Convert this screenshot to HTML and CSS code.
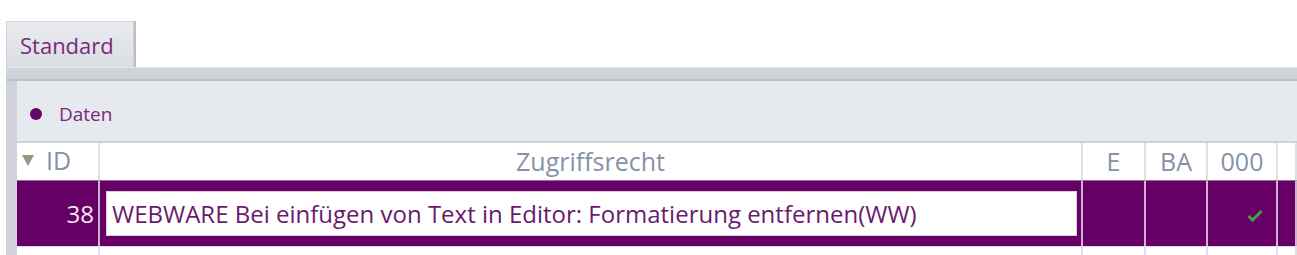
FILE: index.html
```html
<!DOCTYPE html>
<html>
<head>
<meta charset="utf-8">
<link rel="stylesheet" href="styles.css">
</head>
<body>
<div class="page">
  <div class="tabs">
    <div class="tab">Standard</div>
  </div>
  <div class="strip"></div>
  <div class="panel">
    <div class="panel-inner">
      <div class="section">
        <span class="bullet"></span>
        <span class="section-title">Daten</span>
      </div>
      <div class="grid">
        <div class="hcell hid"><svg class="sort" width="12" height="11" viewBox="0 0 12 11"><path d="M0 0 H12 L6 11 Z" fill="#9c9482"/></svg><span>ID</span></div>
        <div class="hcell center">Zugriffsrecht</div>
        <div class="hcell center">E</div>
        <div class="hcell center">BA</div>
        <div class="hcell center">000</div>
        <div class="hcell"></div>

        <div class="dcell num">38</div>
        <div class="dcell edit"><div class="input">WEBWARE Bei einfügen von Text in Editor: Formatierung entfernen(WW)</div></div>
        <div class="dcell"></div>
        <div class="dcell"></div>
        <div class="dcell check"><svg width="16" height="13" viewBox="0 0 16 13"><path d="M1.5 7 L5.5 11 L14.5 2" fill="none" stroke="#3fa33f" stroke-width="3"/></svg></div>
        <div class="dcell"></div>

        <div class="ecell"></div>
        <div class="ecell"></div>
        <div class="ecell"></div>
        <div class="ecell"></div>
        <div class="ecell"></div>
        <div class="ecell"></div>
      </div>
    </div>
  </div>
</div>
</body>
</html>
```

FILE: styles.css
```css
* { box-sizing: border-box; }
html, body { margin: 0; padding: 0; background: #fff; }
body { font-family: "Open Sans", "Noto Sans", sans-serif; width: 1297px; height: 255px; overflow: hidden; }

.page { padding-top: 21px; }

.tabs { display: flex; padding-left: 6px; height: 46px; }
.tab {
  width: 128px;
  height: 46px;
  background: linear-gradient(#e9ebef, #dadde2);
  border: 1px solid #cfd3d9;
  border-bottom: none;
  box-shadow: 2px 0 0 #b9bdc4;
  color: #7a2a7e;
  font-size: 22px;
  padding: 9px 0 0 13px;
  line-height: 28px;
}

.strip {
  margin-left: 6px;
  height: 14px;
  background: #d0d4da;
  border-top: 1px solid #e3e6ea;
  border-bottom: 2px solid #bcc3cb;
}

.panel {
  margin-left: 6px;
  padding-left: 11px;
  background: #d0d4da;
}
.panel-inner { background: #e6e9ee; }

.section {
  height: 60px;
  display: flex;
  align-items: center;
  padding-left: 13px;
  padding-top: 6px;
}
.bullet {
  width: 12px; height: 12px; border-radius: 50%;
  background: #650866;
  margin-right: 17px;
}
.section-title { color: #7a2a7e; font-size: 19px; }

.grid {
  display: grid;
  grid-template-columns: 83px 983px 63px 62px 70px 1fr;
  grid-template-rows: 37px 66px 9px;
  background: #fff;
  border-top: 2px solid #cdd2d8;
}
.hcell {
  border-right: 2px solid #dde0e5;
  color: #8492a8;
  font-size: 25px;
  display: flex;
  align-items: center;
  line-height: 1;
}
.hcell.center { justify-content: center; }
.hid { padding-left: 5px; padding-bottom: 2px; }
.sort { margin-right: 12px; }

.dcell {
  background: #660066;
  border-right: 2px solid #c9b4c9;
  border-top: 1px solid #a06aa0;
  display: flex;
  align-items: center;
}
.num {
  justify-content: flex-end;
  color: #f3e9f3;
  font-size: 24px;
  padding-right: 4px;
}
.edit { padding: 0 4px 0 6px; }
.input {
  width: 100%;
  height: 45px;
  background: #fff;
  border: 1px solid #d9cfd9;
  color: #6a1a6e;
  font-size: 24px;
  display: flex;
  align-items: center;
  padding-left: 5px;
  white-space: nowrap;
}
.check { justify-content: flex-end; padding: 4px 13px 0 0; }
.ecell { border-right: 2px solid #dde0e5; border-top: 1px solid #e3d4e3; }
```
